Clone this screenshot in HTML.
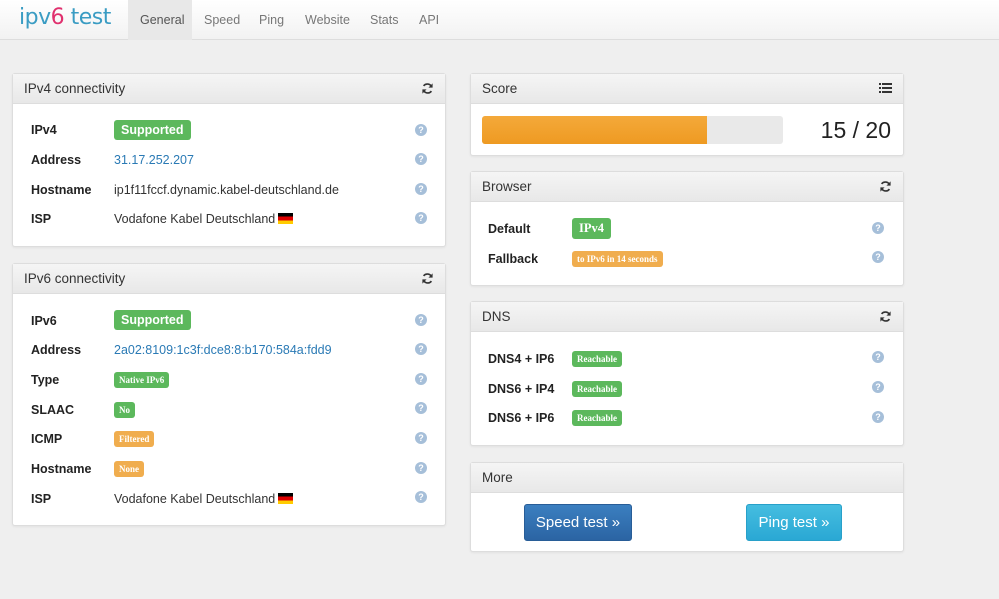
<!DOCTYPE html>
<html><head><meta charset="utf-8"><style>
*{box-sizing:border-box;margin:0;padding:0}
body{width:999px;height:599px;background:#efefef;font-family:"Liberation Sans",sans-serif;font-size:13px;color:#333;position:relative;overflow:hidden}
.nav{position:absolute;left:0;top:0;width:999px;height:40px;background:linear-gradient(#fff,#f2f2f2);border-bottom:1px solid #ddd}
.logo{position:absolute;left:19px;top:5px;font-size:22px;color:#3a9cc3;letter-spacing:-0.5px;font-family:"DejaVu Sans",sans-serif}
.logo b{color:#e0306e;font-weight:normal}
.nav a{position:absolute;top:13px;font-size:12.5px;color:#777;text-decoration:none}
.act{position:absolute;left:128px;top:0;width:64px;height:40px;background:#e8e8e8}
.panel{position:absolute;background:#fff;border:1px solid #ddd;border-radius:3px;box-shadow:0 1px 2px rgba(0,0,0,.06)}
.hd{height:30px;background:linear-gradient(#f5f5f5,#e8e8e8);border-bottom:1px solid #ddd;padding:7px 11px;font-size:13.5px;color:#333;position:relative}
.ic{position:absolute;right:11px;top:8px}
.lb{position:absolute;font-weight:bold;color:#222;white-space:nowrap;font-size:12.5px}
.v{position:absolute;white-space:nowrap;font-size:12.5px}
.link{color:#2a7ab5}
.bg{display:inline-block;color:#fff;font-weight:bold;border-radius:3px;padding:3px 7px;font-size:12.5px}
.sm{font-size:9px;padding:3px 5px;font-family:"Liberation Serif",serif}
.g{background:#5cb85c}.o{background:#f0ad4e}
.q{position:absolute;width:12px;height:12px;border-radius:50%;background:#a6bfd9;color:#fff;font-size:9px;font-weight:bold;line-height:12px;text-align:center;font-style:normal}
.flag{display:inline-block;width:15px;height:11px;vertical-align:-1px;background:linear-gradient(#000 33%,#d00 33%,#d00 66%,#fc0 66%);margin-left:3px}
.btn{position:absolute;color:#fff;font-size:15px;text-align:center;border-radius:3px;line-height:35px}
</style></head><body>
<div class="nav"><div class="act"></div>
<div class="logo">ipv<b>6</b> test</div>
<a style="left:140px;color:#555">General</a><a style="left:204px">Speed</a><a style="left:259px">Ping</a><a style="left:305px">Website</a><a style="left:370px">Stats</a><a style="left:419px">API</a>
</div>

<svg width="0" height="0" style="position:absolute"><defs><symbol id="rf" viewBox="0 0 14 14"><path d="M11.5 5.5A5 5 0 0 0 2.8 4.2M2.5 8.5a5 5 0 0 0 8.7 1.3" stroke="#333" stroke-width="1.8" fill="none"/><path d="M12.5 1.5v4.5H8z M1.5 12.5V8H6z" fill="#333"/></symbol></defs></svg>

<div class="panel" style="left:12px;top:73px;width:434px;height:174px">
<div class="hd">IPv4 connectivity<svg class="ic" width="13" height="13"><use href="#rf"/></svg></div>
</div>
<div class="panel" style="left:12px;top:263px;width:434px;height:263px">
<div class="hd">IPv6 connectivity<svg class="ic" width="13" height="13"><use href="#rf"/></svg></div>
</div>
<div class="panel" style="left:470px;top:73px;width:434px;height:83px">
<div class="hd">Score<svg class="ic" width="13" height="12" viewBox="0 0 13 12"><path d="M0 1h2v2H0zM3 1h10v2H3zM0 5h2v2H0zM3 5h10v2H3zM0 9h2v2H0zM3 9h10v2H3z" fill="#333"/></svg></div>
<div style="position:absolute;left:11px;top:42px;width:301px;height:28px;background:#e9e9e9;border-radius:3px;overflow:hidden"><div style="width:225px;height:100%;background:linear-gradient(#f4a93a,#ee9a22)"></div></div>
<div style="position:absolute;right:12px;top:43px;font-size:23px;color:#222">15 / 20</div>
</div>
<div class="panel" style="left:470px;top:171px;width:434px;height:115px">
<div class="hd">Browser<svg class="ic" width="13" height="13"><use href="#rf"/></svg></div>
</div>
<div class="panel" style="left:470px;top:301px;width:434px;height:145px">
<div class="hd">DNS<svg class="ic" width="13" height="13"><use href="#rf"/></svg></div>
</div>
<div class="panel" style="left:470px;top:462px;width:434px;height:90px">
<div class="hd">More</div>
<div class="btn" style="left:53px;top:41px;width:108px;background:linear-gradient(#3b7fc0,#2b64a3);border:1px solid #285d97">Speed test »</div>
<div class="btn" style="left:275px;top:41px;width:96px;background:linear-gradient(#45bde0,#2aa8d4);border:1px solid #28a0c9">Ping test »</div>
</div>

<div style="position:absolute;left:0;top:0">
<span class="lb" style="left:31px;top:123px">IPv4</span><span class="v" style="left:114px;top:120px"><span class="bg g">Supported</span></span><i class="q" style="left:415px;top:124px">?</i>
<span class="lb" style="left:31px;top:153px">Address</span><span class="v link" style="left:114px;top:153px">31.17.252.207</span><i class="q" style="left:415px;top:153px">?</i>
<span class="lb" style="left:31px;top:183px">Hostname</span><span class="v" style="left:114px;top:183px">ip1f11fccf.dynamic.kabel-deutschland.de</span><i class="q" style="left:415px;top:183px">?</i>
<span class="lb" style="left:31px;top:212px">ISP</span><span class="v" style="left:114px;top:212px">Vodafone Kabel Deutschland<span class="flag"></span></span><i class="q" style="left:415px;top:212px">?</i>
<span class="lb" style="left:31px;top:314px">IPv6</span><span class="v" style="left:114px;top:310px"><span class="bg g">Supported</span></span><i class="q" style="left:415px;top:314px">?</i>
<span class="lb" style="left:31px;top:343px">Address</span><span class="v link" style="left:114px;top:343px">2a02:8109:1c3f:dce8:8:b170:584a:fdd9</span><i class="q" style="left:415px;top:343px">?</i>
<span class="lb" style="left:31px;top:373px">Type</span><span class="v" style="left:114px;top:372px"><span class="bg g sm">Native IPv6</span></span><i class="q" style="left:415px;top:373px">?</i>
<span class="lb" style="left:31px;top:403px">SLAAC</span><span class="v" style="left:114px;top:402px"><span class="bg g sm">No</span></span><i class="q" style="left:415px;top:402px">?</i>
<span class="lb" style="left:31px;top:432px">ICMP</span><span class="v" style="left:114px;top:431px"><span class="bg o sm">Filtered</span></span><i class="q" style="left:415px;top:432px">?</i>
<span class="lb" style="left:31px;top:462px">Hostname</span><span class="v" style="left:114px;top:461px"><span class="bg o sm">None</span></span><i class="q" style="left:415px;top:462px">?</i>
<span class="lb" style="left:31px;top:492px">ISP</span><span class="v" style="left:114px;top:492px">Vodafone Kabel Deutschland<span class="flag"></span></span><i class="q" style="left:415px;top:491px">?</i>
<span class="lb" style="left:488px;top:222px">Default</span><span class="v" style="left:572px;top:218px"><span class="bg g" style="font-family:'Liberation Serif',serif">IPv4</span></span><i class="q" style="left:872px;top:222px">?</i>
<span class="lb" style="left:488px;top:252px">Fallback</span><span class="v" style="left:572px;top:251px"><span class="bg o sm">to IPv6 in 14 seconds</span></span><i class="q" style="left:872px;top:251px">?</i>
<span class="lb" style="left:488px;top:352px">DNS4 + IP6</span><span class="v" style="left:572px;top:351px"><span class="bg g sm">Reachable</span></span><i class="q" style="left:872px;top:351px">?</i>
<span class="lb" style="left:488px;top:382px">DNS6 + IP4</span><span class="v" style="left:572px;top:381px"><span class="bg g sm">Reachable</span></span><i class="q" style="left:872px;top:381px">?</i>
<span class="lb" style="left:488px;top:411px">DNS6 + IP6</span><span class="v" style="left:572px;top:410px"><span class="bg g sm">Reachable</span></span><i class="q" style="left:872px;top:411px">?</i>
</div>
</body></html>
